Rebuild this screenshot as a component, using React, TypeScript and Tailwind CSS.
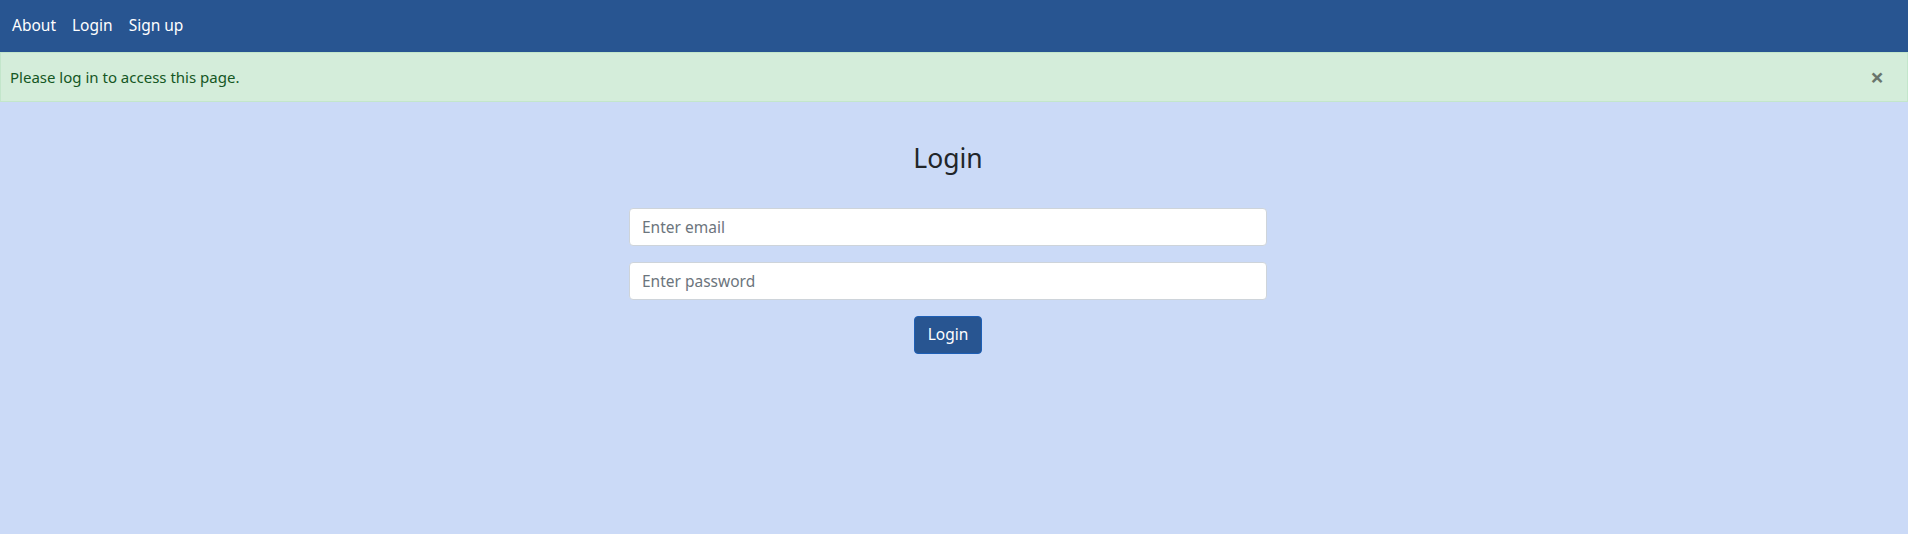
import React from "react";

export default function App() {
  return (
    <div className="min-h-[534px] w-full bg-[#cbdaf7] font-['Noto_Sans',sans-serif] text-[15px]">
      <nav className="flex h-[52px] items-center bg-[#285591] px-[4px]">
        <a className="px-[8px] text-[15.5px] text-white">About</a>
        <a className="px-[8px] text-[15.5px] text-white">Login</a>
        <a className="px-[8px] text-[15.5px] text-white">Sign up</a>
      </nav>
      <div className="flex h-[50px] items-center justify-between border border-[#c3e6cb] bg-[#d4edda] pl-[9px] pr-[23px] text-[#155724]">
        <span>Please log in to access this page.</span>
        <span className="text-[24px] font-bold leading-none text-[#000] opacity-50">×</span>
      </div>
      <div className="ml-[629px] flex w-[638px] flex-col items-center pt-[41px]">
        <h3 className="mb-[33px] text-[26.5px] leading-[1.2] text-[#212529]">Login</h3>
        <input
          className="mb-[16px] h-[38px] w-full rounded-[4px] border border-[#ced4da] bg-white px-[12px] text-[15.5px] text-[#495057] placeholder:text-[#6c757d]"
          placeholder="Enter email"
        />
        <input
          className="mb-[16px] h-[38px] w-full rounded-[4px] border border-[#ced4da] bg-white px-[12px] text-[15.5px] text-[#495057] placeholder:text-[#6c757d]"
          placeholder="Enter password"
          type="password"
        />
        <button className="h-[38px] rounded-[4px] border border-[#1d5fb6] bg-[#285591] px-[13px] text-[15.5px] text-white">
          Login
        </button>
      </div>
    </div>
  );
}
